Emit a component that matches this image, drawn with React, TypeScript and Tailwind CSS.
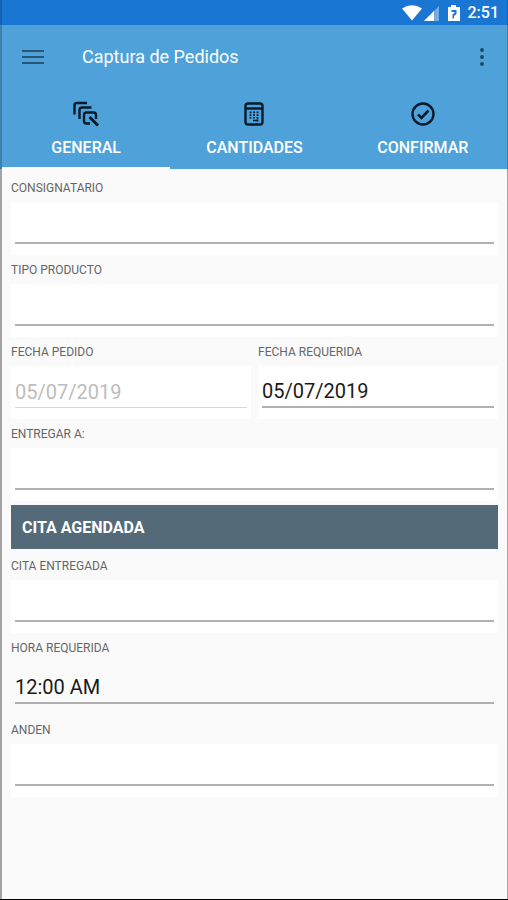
import { useState } from "react";
import clsx from "clsx";

const StackIcon = () => (
  <svg className="h-[26px] w-[26px]" viewBox="0 0 26 26" fill="none" stroke="#0a1a28" strokeWidth="2.4">
    <path d="M14 2H4Q1.5 2 1.5 4.500V13.500" />
    <path d="M18.500 6.500H9Q6.500 6.500 6.500 9V18" />
    <path d="M17 22.500h-3.500q-2.500 0-2.500-2.500v-6q0-2.500 2.500-2.500h7q2.500 0 2.500 2.500v4" />
    <path d="M16.500 16l8.500 8.500" strokeWidth="3" />
  </svg>
);

const CalculatorIcon = () => (
  <svg className="h-[26px] w-[26px]" viewBox="0 0 26 26" fill="none" stroke="#0a1a28" strokeWidth="2.4">
    <rect x="4.500" y="2.500" width="17" height="21" rx="2.500" />
    <path d="M4.500 7.500h17" />
    <path d="M9.500 10.500v7M13 10.500v7M16.500 10.500v10" strokeWidth="1.800" strokeDasharray="1.800 0.900" />
    <path d="M12 19.500h5" strokeWidth="1.500" />
  </svg>
);

const CheckIcon = () => (
  <svg className="h-[26px] w-[26px]" viewBox="0 0 26 26" fill="none" stroke="#0a1a28" strokeWidth="2.4">
    <circle cx="13" cy="13" r="10.500" />
    <path d="M8 13.500l3.500 3.500 7-7.500" strokeWidth="2.600" />
  </svg>
);

const StatusIcons = () => (
  <svg className="h-[18px] w-[60px]" viewBox="0 0 60 18" fill="#fff">
    <path d="M0 4.500Q10 -2 20 4.500L10 16.500z" />
    <path d="M22 17L37 2v15z" fillOpacity=".4" />
    <path d="M22 17L32 7v10z" />
    <path d="M46 3h3V1h5v2h4v14H46z" />
    <path d="M49.500 6h5v4l-2.500 2v2.500h-1.500v-4l2-1.500v-1h-3z" fill="#1976d2" />
  </svg>
);

const tabs = [
  { name: "GENERAL", Icon: StackIcon },
  { name: "CANTIDADES", Icon: CalculatorIcon },
  { name: "CONFIRMAR", Icon: CheckIcon },
];

interface FieldProps {
  id: string;
  label: string;
  value?: string;
  disabled?: boolean;
  plain?: boolean;
}

const Field = ({ id, label, value = "", disabled, plain }: FieldProps) => (
  <div className="flex min-w-0 flex-1 flex-col">
    <label htmlFor={id} className="flex h-[29px] items-center text-xs text-[#666]">
      {label}
    </label>
    <div className={clsx("h-[53px] px-1", !plain && "bg-white")}>
      <input
        id={id}
        type="text"
        defaultValue={value}
        disabled={disabled}
        className={clsx(
          "h-[42px] w-full bg-transparent pt-[10px] text-xl outline-none",
          disabled ? "border-b border-[#d8d8d8] text-[#bdbdbd]" : "border-b-2 border-[#b0b0b0] text-[#1a1a1a]"
        )}
      />
    </div>
  </div>
);

const App = () => {
  const [active, setActive] = useState("GENERAL");

  return (
    <div className="flex min-h-screen flex-col border-b border-black bg-[#fafafa] font-['Roboto',sans-serif]">
      {/* Status bar */}
      <div className="flex h-[25px] items-center justify-end gap-[6px] border-r border-l-2 border-[#1562b0] bg-[#1976d2] pr-2 text-white">
        <StatusIcons />
        <span className="text-base font-medium">2:51</span>
      </div>

      <header className="border-r border-l-2 border-[#4080ae] bg-[#4fa1da]">
        <div className="flex h-16 items-center pl-5 pr-[17px]">
          <button aria-label="Menú" className="flex w-[22px] flex-col gap-1">
            <span className="h-[2px] w-full bg-[#2a5674]" />
            <span className="h-[2px] w-full bg-[#2a5674]" />
            <span className="h-[2px] w-full bg-[#2a5674]" />
          </button>
          <h1 className="ml-[38px] flex-1 text-lg text-white">Captura de Pedidos</h1>
          <button aria-label="Más opciones" className="flex w-4 flex-col items-center gap-[3px]">
            <span className="size-1 rounded-full bg-[#234a65]" />
            <span className="size-1 rounded-full bg-[#234a65]" />
            <span className="size-1 rounded-full bg-[#234a65]" />
          </button>
        </div>
        <div role="tablist" className="grid grid-cols-3">
          {tabs.map(({ name, Icon }) => (
            <button
              key={name}
              role="tab"
              aria-selected={active === name}
              onClick={() => setActive(name)}
              className={clsx(
                "flex h-20 flex-col items-center gap-[9px] border-b-2 pt-3 text-base font-medium text-white",
                active === name ? "border-white" : "border-transparent"
              )}
            >
              <Icon />
              {name}
            </button>
          ))}
        </div>
      </header>

      {/* Order form */}
      <form className="flex-1 border-r border-l-2 border-[#a4a4a4] px-[9px] pt-1">
        <Field id="consignatario" label="CONSIGNATARIO" />
        <Field id="tipo" label="TIPO PRODUCTO" />
        <div className="flex gap-[7px]">
          <Field id="fecha-pedido" label="FECHA PEDIDO" value="05/07/2019" disabled />
          <Field id="fecha-requerida" label="FECHA REQUERIDA" value="05/07/2019" />
        </div>
        <Field id="entregar" label="ENTREGAR A:" />
        <h2 className="mt-1 mb-[2px] flex h-[44px] items-center bg-[#546a79] pt-[2px] pl-[11px] text-base font-bold text-white">
          CITA AGENDADA
        </h2>
        <Field id="cita" label="CITA ENTREGADA" />
        <Field id="hora" label="HORA REQUERIDA" value="12:00 AM" plain />
        <Field id="anden" label="ANDEN" />
      </form>
    </div>
  );
};

export default App;
